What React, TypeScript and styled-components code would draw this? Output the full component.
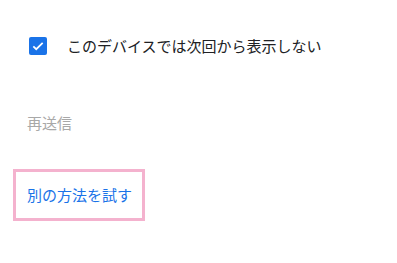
import React, { useState } from 'react';
import styled, { createGlobalStyle } from 'styled-components';

const GlobalStyle = createGlobalStyle`
    html, body {
        margin: 0;
        padding: 0;
        background: #ffffff;
    }
    body {
        font-family: "Noto Sans CJK JP", "Noto Sans", sans-serif;
    }
`;

const Page = styled.div`
    display: flex;
    flex-direction: column;
    align-items: flex-start;
    padding-top: 36px;
`;

const RememberRow = styled.label`
    display: flex;
    align-items: center;
    gap: 20px;
    margin-left: 29px;
    cursor: pointer;
`;

const Box = styled.span<{ checked: boolean }>`
    width: 18px;
    height: 18px;
    border-radius: 2px;
    background: ${({ checked }) => (checked ? '#1a73e8' : '#ffffff')};
    border: ${({ checked }) => (checked ? 'none' : '2px solid #5f6368')};
    box-sizing: border-box;
    display: flex;
    align-items: center;
    justify-content: center;
`;

const Label = styled.span`
    font-size: 15px;
    line-height: 20px;
    color: #202124;
`;

const Resend = styled.span`
    margin-top: 57px;
    margin-left: 27px;
    font-size: 15px;
    line-height: 20px;
    color: #a8a8a8;
`;

const TryAnother = styled.button`
    margin-top: 36px;
    margin-left: 13px;
    padding: 13px 10px 13px 11px;
    border: 3px solid #f4b2ce;
    background: transparent;
    font-family: inherit;
    font-size: 15px;
    line-height: 20px;
    color: #1a73e8;
    cursor: pointer;
`;

const App: React.FC = () => {
    const [checked, setChecked] = useState(true);

    return (
        <Page>
            <GlobalStyle />
            <RememberRow onClick={() => setChecked(!checked)}>
                <Box checked={checked}>
                    {checked && (
                        <svg width="14" height="14" viewBox="0 0 24 24">
                            <path d="M4 12.5l5 5L20 6.5" fill="none" stroke="#ffffff" strokeWidth="3" />
                        </svg>
                    )}
                </Box>
                <Label>このデバイスでは次回から表示しない</Label>
            </RememberRow>
            <Resend>再送信</Resend>
            <TryAnother>別の方法を試す</TryAnother>
        </Page>
    );
};

export default App;
